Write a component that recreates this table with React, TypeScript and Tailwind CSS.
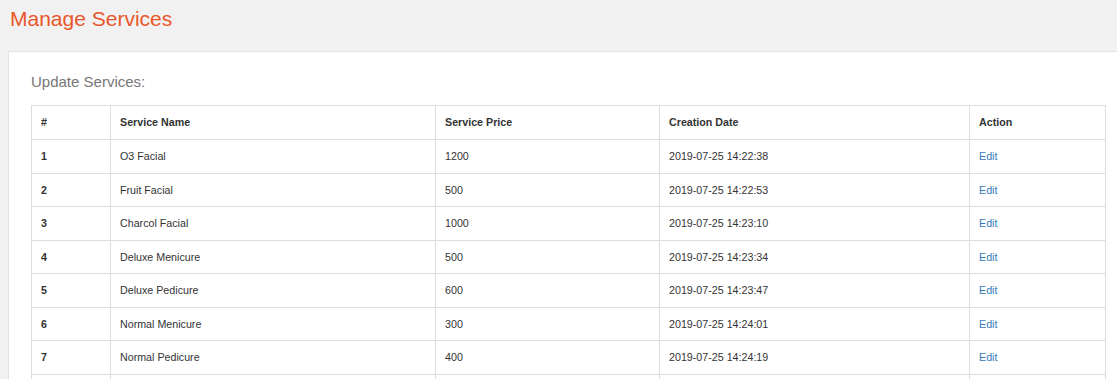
import React from "react";

const rows = [
  ["1", "O3 Facial", "1200", "2019-07-25 14:22:38"],
  ["2", "Fruit Facial", "500", "2019-07-25 14:22:53"],
  ["3", "Charcol Facial", "1000", "2019-07-25 14:23:10"],
  ["4", "Deluxe Menicure", "500", "2019-07-25 14:23:34"],
  ["5", "Deluxe Pedicure", "600", "2019-07-25 14:23:47"],
  ["6", "Normal Menicure", "300", "2019-07-25 14:24:01"],
  ["7", "Normal Pedicure", "400", "2019-07-25 14:24:19"],
];

export default function App() {
  return (
    <div
      className="w-[1117px] h-[379px] overflow-hidden bg-[#f1f1f1]"
      style={{ fontFamily: '"Liberation Sans", Arial, sans-serif' }}
    >
      <h1 className="pl-[10px] pt-[7px] h-[51px] text-[21px] leading-[24px] text-[#e9572a] font-normal">
        Manage Services
      </h1>
      <div className="ml-[8px] w-[1130px] bg-white border-l border-t border-[#e3e3e3] pl-[22px] pt-[21px] pb-10">
        <h2 className="text-[15px] leading-[17px] text-[#777] font-normal">Update Services:</h2>
        <table className="mt-[15px] w-[1074px] table-fixed border-collapse text-[10.7px] text-[#333]">
          <colgroup>
            <col className="w-[79px]" />
            <col className="w-[325px]" />
            <col className="w-[224px]" />
            <col className="w-[310px]" />
            <col className="w-[136px]" />
          </colgroup>
          <thead>
            <tr className="h-[34px]">
              {["#", "Service Name", "Service Price", "Creation Date", "Action"].map((h) => (
                <th key={h} className="border border-[#ddd] px-[9px] text-left font-bold align-middle">
                  {h}
                </th>
              ))}
            </tr>
          </thead>
          <tbody>
            {rows.map((r) => (
              <tr key={r[0]} className="h-[33.5px]">
                <td className="border border-[#ddd] px-[9px] font-bold align-middle">{r[0]}</td>
                <td className="border border-[#ddd] px-[9px] align-middle">{r[1]}</td>
                <td className="border border-[#ddd] px-[9px] align-middle">{r[2]}</td>
                <td className="border border-[#ddd] px-[9px] align-middle">{r[3]}</td>
                <td className="border border-[#ddd] px-[9px] align-middle">
                  <a href="#" className="text-[#337ab7]">Edit</a>
                </td>
              </tr>
            ))}
            <tr className="h-[33.5px]">
              <td className="border border-[#ddd]" />
              <td className="border border-[#ddd]" />
              <td className="border border-[#ddd]" />
              <td className="border border-[#ddd]" />
              <td className="border border-[#ddd]" />
            </tr>
          </tbody>
        </table>
      </div>
    </div>
  );
}
